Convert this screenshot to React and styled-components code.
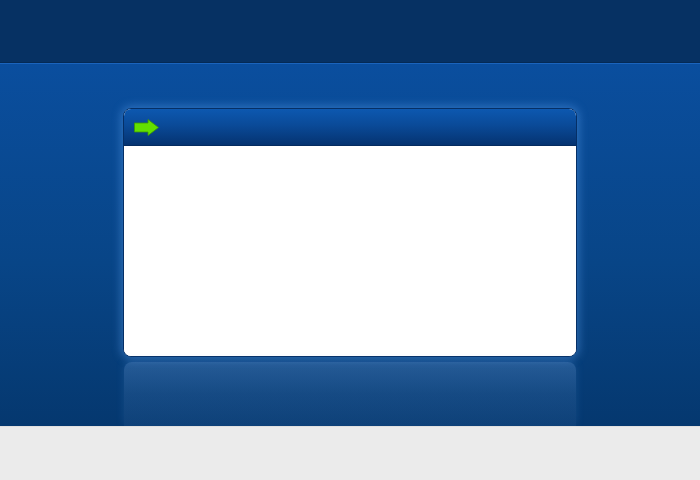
import React from 'react';
import styled, { createGlobalStyle } from 'styled-components';

const GlobalStyle = createGlobalStyle`
    html, body {
        margin: 0;
        padding: 0;
        width: 700px;
        height: 480px;
        overflow: hidden;
        font-family: "Liberation Sans", Arial, sans-serif;
    }
`;

const Page = styled.div`
    display: flex;
    flex-direction: column;
    width: 700px;
    height: 480px;
`;

const TopBar = styled.div`
    height: 62px;
    flex-shrink: 0;
    background: #063163;
    border-bottom: 1px solid #042a55;
`;

const Stage = styled.div`
    flex: 1;
    display: flex;
    flex-direction: column;
    align-items: center;
    padding-top: 44px;
    border-top: 1px solid #1a64bd;
    background: linear-gradient(to bottom, #0a4e9e 0%, #084587 55%, #05386f 100%);
    overflow: hidden;
`;

const Window = styled.div`
    width: 452px;
    height: 247px;
    flex-shrink: 0;
    display: flex;
    flex-direction: column;
    border: 1px solid #052f66;
    border-radius: 8px;
    overflow: hidden;
    box-shadow: 0 0 10px 2px rgba(90, 160, 240, 0.45);
    background: #ffffff;
`;

const WindowHeader = styled.div`
    height: 36px;
    display: flex;
    align-items: center;
    padding-left: 10px;
    background: linear-gradient(to bottom, #0d58b0 0%, #0a4a98 45%, #053371 100%);
    border-bottom: 1px solid #042b60;
`;

const WindowBody = styled.div`
    flex: 1;
    background: #ffffff;
`;

const Reflection = styled.div`
    width: 452px;
    flex: 1;
    margin-top: 5px;
    border-radius: 8px 8px 0 0;
    background: linear-gradient(to bottom, rgba(120, 170, 230, 0.28) 0%, rgba(120, 170, 230, 0.14) 50%, rgba(120, 170, 230, 0.08) 100%);
    box-shadow: 0 -2px 8px rgba(90, 160, 240, 0.18);
`;

const Footer = styled.div`
    height: 53px;
    flex-shrink: 0;
    background: #ebebeb;
    border-top: 1px solid #e0e0e0;
`;

const Arrow = () => (
    <svg width="25" height="17" viewBox="0 0 25 17">
        <polygon points="0.5,4 14,4 14,0.5 24.5,8.5 14,16.5 14,13 0.5,13" fill="#62e000" stroke="#3c9a00" strokeWidth="0.8" />
    </svg>
);

const App = () => {
    return (
        <Page>
            <GlobalStyle />
            <TopBar />
            <Stage>
                <Window>
                    <WindowHeader>
                        <Arrow />
                    </WindowHeader>
                    <WindowBody />
                </Window>
                <Reflection />
            </Stage>
            <Footer />
        </Page>
    );
}

export default App;
